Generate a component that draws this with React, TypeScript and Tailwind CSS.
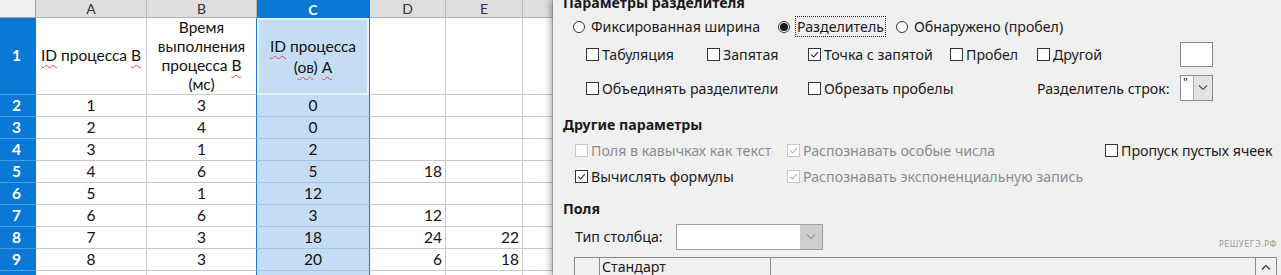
import React from "react"

const rows = [
  ["1", "3", "0", "", ""],
  ["2", "4", "0", "", ""],
  ["3", "1", "2", "", ""],
  ["4", "6", "5", "18", ""],
  ["5", "1", "12", "", ""],
  ["6", "6", "3", "12", ""],
  ["7", "3", "18", "24", "22"],
  ["8", "3", "20", "6", "18"],
]

const squiggle = "underline decoration-wavy decoration-[#e04848] decoration-1 underline-offset-[3px]"

function Check({ checked = false, disabled = false }: { checked?: boolean; disabled?: boolean }) {
  return (
    <span
      className={`w-[13px] h-[13px] shrink-0 border bg-white flex items-center justify-center ${
        disabled ? "border-[#c8c8c8]" : "border-[#333333]"
      }`}
    >
      {checked && (
        <svg width="11" height="11" viewBox="0 0 11 11">
          <path d="M2.2 5.6 L4.6 8 L8.8 3.2" fill="none" stroke={disabled ? "#b4b4b4" : "#222"} strokeWidth="1.1" />
        </svg>
      )}
    </span>
  )
}

function Radio({ on = false }: { on?: boolean }) {
  return (
    <span className="w-[12px] h-[12px] shrink-0 rounded-full border border-[#333333] bg-white flex items-center justify-center">
      {on && <span className="w-[8px] h-[8px] rounded-full bg-[#1a1a1a]" />}
    </span>
  )
}

function Opt({ w, children, checked, disabled }: { w: string; children: React.ReactNode; checked?: boolean; disabled?: boolean }) {
  return (
    <div className={`${w} shrink-0 flex items-center gap-[3px] ${disabled ? "text-[#8c8c8c]" : ""}`}>
      <Check checked={checked} disabled={disabled} />
      <span className="whitespace-nowrap">{children}</span>
    </div>
  )
}

function Chevron({ color = "#555", up = false }: { color?: string; up?: boolean }) {
  return (
    <svg width="10" height="6" viewBox="0 0 10 6">
      <path d={up ? "M1 5.5 L5 1.5 L9 5.5" : "M1 0.5 L5 4.5 L9 0.5"} fill="none" stroke={color} strokeWidth="1.2" />
    </svg>
  )
}

function Sheet() {
  const cols = ["A", "B", "C", "D", "E", ""]
  const cell = "border-r border-b border-[#c8c8c8] flex items-center"
  return (
    <div className="w-[553px] shrink-0 grid grid-cols-[36px_111px_110px_113px_76px_77px_30px] grid-rows-[18px_77px_repeat(9,22px)] bg-white font-['Lato',sans-serif] text-[15.5px] text-[#111]">
      <div className="bg-[#f0f0f0] border-r border-b border-[#a8a8a8]" />
      {cols.map((c, i) =>
        c === "C" ? (
          <div key={i} className="bg-[#0a78d5] text-white font-bold text-[14px] flex items-center justify-center border-r border-[#0a78d5]">
            {c}
          </div>
        ) : (
          <div key={i} className="bg-[#dedede] text-[#333] text-[14px] flex items-center justify-center border-r border-b border-[#b4b4b4]">
            {c}
          </div>
        )
      )}

      {/* row 1 */}
      <div className="bg-[#0a78d5] text-white font-bold flex items-center justify-center pr-[3px] border-b border-[#4f9be0]">1</div>
      <div className={`${cell} justify-center text-center`}>
        <span>
          <span className={squiggle}>ID</span> процесса <span className={squiggle}>В</span>
        </span>
      </div>
      <div className="border-r border-b border-r-[#1a78d2] border-b-[#c8c8c8] flex items-center justify-center text-center leading-[19px]">
        <span>
          Время
          <br />
          выполнения
          <br />
          процесса <span className={squiggle}>В</span>
          <br />
          (мс)
        </span>
      </div>
      <div className="bg-[#c5ddf4] border-r border-r-[#1a78d2] shadow-[inset_0_0_0_2px_#e8f2fc] flex items-center justify-center text-center leading-[21px]">
        <span>
          <span className={squiggle}>ID</span> процесса
          <br />(<span className={squiggle}>ов</span>) <span className={squiggle}>А</span>
        </span>
      </div>
      <div className={cell} />
      <div className={cell} />
      <div className={cell} />

      {rows.map((r, i) => (
        <React.Fragment key={i}>
          <div className="bg-[#0a78d5] text-white font-bold flex items-center justify-center pr-[3px] border-b border-[#4f9be0]">
            {i + 2}
          </div>
          <div className={`${cell} justify-center`}>{r[0]}</div>
          <div className="border-r border-b border-r-[#1a78d2] border-b-[#c8c8c8] flex items-center justify-center">{r[1]}</div>
          <div className="bg-[#c5ddf4] border-r border-b border-r-[#1a78d2] border-b-[#a9c4df] flex items-center justify-center">{r[2]}</div>
          <div className={`${cell} justify-end pr-[3px]`}>{r[3]}</div>
          <div className={`${cell} justify-end pr-[3px]`}>{r[4]}</div>
          <div className={cell} />
        </React.Fragment>
      ))}

      {/* row 10, only its top edge shows */}
      <div className="bg-[#0a78d5] border-b border-[#4f9be0]" />
      <div className={cell} />
      <div className="border-r border-b border-r-[#1a78d2] border-b-[#c8c8c8]" />
      <div className="bg-[#c5ddf4] border-r border-r-[#1a78d2]" />
      <div className={cell} />
      <div className={cell} />
      <div className={cell} />
    </div>
  )
}

function Dialog() {
  return (
    <div className="relative flex-1 bg-[#f0f0f0] shadow-[-3px_0_6px_rgba(0,0,0,0.3)] font-['Noto_Sans',sans-serif] text-[14.2px] text-[#1a1a1a] flex flex-col">
      <div className="pl-[10px] -mt-[7px] h-[20px] leading-[20px] font-bold whitespace-nowrap">Параметры разделителя</div>

      <div className="mt-[3px] h-[22px] pl-[20px] flex items-center">
        <div className="w-[205px] shrink-0 flex items-center gap-[6px]">
          <Radio />
          <span className="whitespace-nowrap">Фиксированная ширина</span>
        </div>
        <div className="w-[118px] shrink-0 flex items-center gap-[5px]">
          <Radio on />
          <span className="whitespace-nowrap border border-dotted border-[#222] leading-[19px] px-[1px]">Разделитель</span>
        </div>
        <div className="flex items-center gap-[6px]">
          <Radio />
          <span className="whitespace-nowrap">Обнаружено (пробел)</span>
        </div>
      </div>

      <div className="mt-[5px] h-[25px] pl-[33px] flex items-center">
        <Opt w="w-[121px]">Табуляция</Opt>
        <Opt w="w-[101px]">Запятая</Opt>
        <Opt w="w-[142px]" checked>
          Точка с запятой
        </Opt>
        <Opt w="w-[87px]">Пробел</Opt>
        <Opt w="w-[143px]">Другой</Opt>
        <div className="w-[33px] h-[25px] shrink-0 bg-white border border-[#8a8a8a]" />
      </div>

      <div className="mt-[8px] h-[26px] pl-[33px] flex items-center">
        <Opt w="w-[222px]">Объединять разделители</Opt>
        <Opt w="w-[229px]">Обрезать пробелы</Opt>
        <div className="w-[143px] shrink-0 whitespace-nowrap">Разделитель строк:</div>
        <div className="w-[33px] h-[26px] shrink-0 border border-[#8a8a8a] flex">
          <div className="w-[12px] bg-white text-[12px] leading-[14px] pl-[2px]">"</div>
          <div className="flex-1 bg-[#e3e3e3] border-l border-[#b0b0b0] flex items-center justify-center">
            <Chevron />
          </div>
        </div>
      </div>

      <div className="mt-[14px] pl-[10px] h-[20px] leading-[20px] font-bold whitespace-nowrap">Другие параметры</div>

      <div className="mt-[5px] h-[22px] pl-[22px] flex items-center">
        <Opt w="w-[212px]" disabled>
          Поля в кавычках как текст
        </Opt>
        <Opt w="w-[318px]" checked disabled>
          Распознавать особые числа
        </Opt>
        <Opt w="w-[172px]">Пропуск пустых ячеек</Opt>
      </div>

      <div className="mt-[4px] h-[22px] pl-[22px] flex items-center">
        <Opt w="w-[212px]" checked>
          Вычислять формулы
        </Opt>
        <Opt w="w-[318px]" checked disabled>
          Распознавать экспоненциальную запись
        </Opt>
      </div>

      <div className="mt-[12px] pl-[10px] h-[20px] leading-[20px] font-bold">Поля</div>

      <div className="mt-[5px] h-[26px] pl-[22px] pr-[4px] flex items-center">
        <div className="w-[101px] shrink-0 whitespace-nowrap">Тип столбца:</div>
        <div className="w-[147px] h-[26px] shrink-0 bg-white border border-[#a0a0a0] flex">
          <div className="flex-1" />
          <div className="w-[22px] bg-[#cfcfcf] flex items-center justify-center">
            <Chevron color="#9a9a9a" />
          </div>
        </div>
        <div className="ml-auto self-end text-[8px] leading-[10px] tracking-[0.5px] text-[#9a9a9a] font-['DejaVu_Sans',sans-serif]">
          РЕШУЕГЭ.РФ
        </div>
      </div>

      <div className="mt-[7px] ml-[21px] mr-[4px] flex-1 border-t border-l border-r border-[#8c8c8c] flex">
        <div className="w-[25px] border-r border-[#8c8c8c]" />
        <div className="w-[171px] border-r border-[#8c8c8c] pl-[2px] leading-[18px] whitespace-nowrap">Стандарт</div>
        <div className="flex-1" />
        <div className="w-[21px] border-l border-[#8c8c8c] flex justify-center pt-[6px]">
          <Chevron color="#333" up />
        </div>
      </div>
    </div>
  )
}

export default function App() {
  return (
    <div className="w-[1281px] h-[275px] overflow-hidden flex">
      <Sheet />
      <Dialog />
    </div>
  )
}
